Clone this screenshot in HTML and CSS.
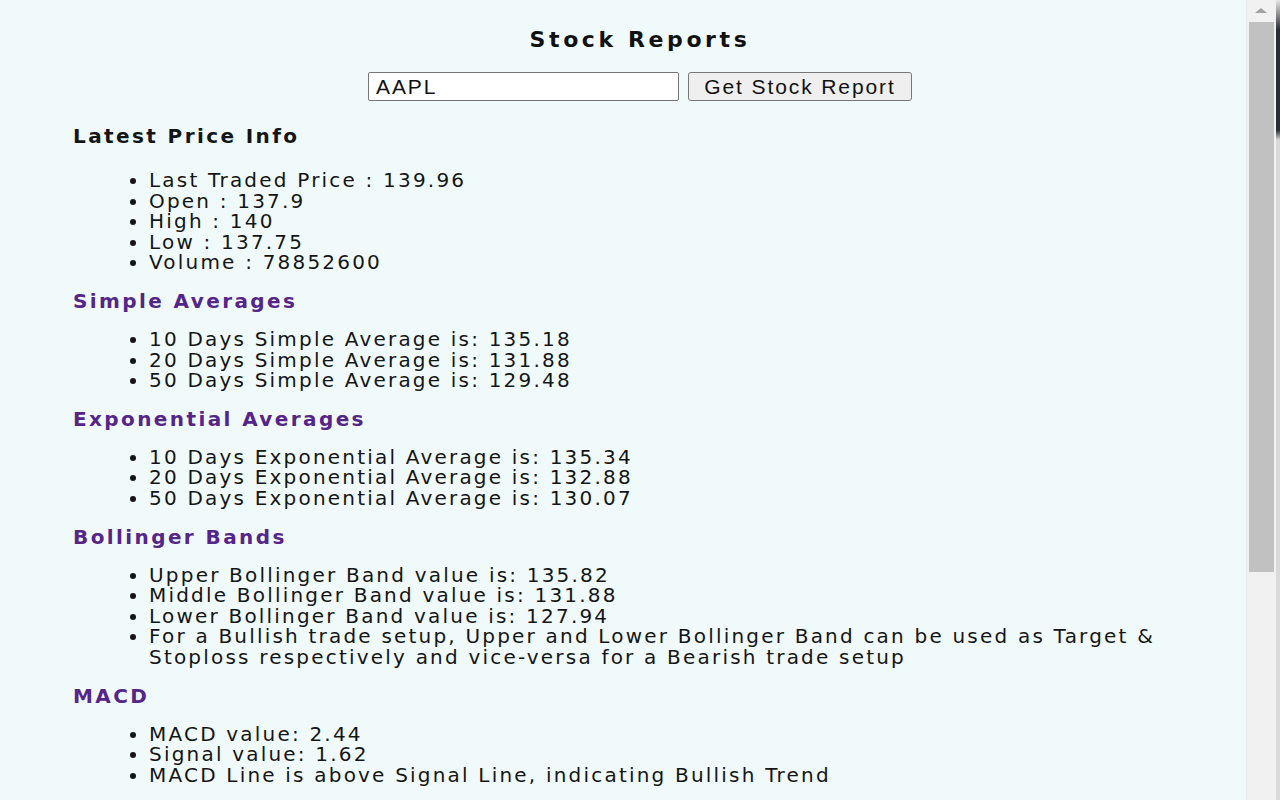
FILE: index.html
```html
<!DOCTYPE html>
<html lang="en">
<head>
  <meta charset="UTF-8">
  <title>Stock Reports</title>
  <link rel="stylesheet" href="styles.css">
</head>
<body>
<div class="page">
  <h1 class="title">Stock Reports</h1>

  <form class="search" onsubmit="return false">
    <input type="text" id="symbol" value="AAPL">
    <button type="submit">Get Stock Report</button>
  </form>

  <div class="report">
    <h3 class="section first">Latest Price Info</h3>
    <ul>
      <li>Last Traded Price : 139.96</li>
      <li>Open : 137.9</li>
      <li>High : 140</li>
      <li>Low : 137.75</li>
      <li>Volume : 78852600</li>
    </ul>

    <h3 class="section purple">Simple Averages</h3>
    <ul>
      <li>10 Days Simple Average is: 135.18</li>
      <li>20 Days Simple Average is: 131.88</li>
      <li>50 Days Simple Average is: 129.48</li>
    </ul>

    <h3 class="section purple">Exponential Averages</h3>
    <ul>
      <li>10 Days Exponential Average is: 135.34</li>
      <li>20 Days Exponential Average is: 132.88</li>
      <li>50 Days Exponential Average is: 130.07</li>
    </ul>

    <h3 class="section purple">Bollinger Bands</h3>
    <ul>
      <li>Upper Bollinger Band value is: 135.82</li>
      <li>Middle Bollinger Band value is: 131.88</li>
      <li>Lower Bollinger Band value is: 127.94</li>
      <li>For a Bullish trade setup, Upper and Lower Bollinger Band can be used as Target &amp; Stoploss respectively and vice-versa for a Bearish trade setup</li>
    </ul>

    <h3 class="section purple">MACD</h3>
    <ul>
      <li>MACD value: 2.44</li>
      <li>Signal value: 1.62</li>
      <li>MACD Line is above Signal Line, indicating Bullish Trend</li>
    </ul>
  </div>
</div>

<!-- popup scrollbar -->
<div class="scrollbar">
  <div class="arrow"></div>
  <div class="thumb"></div>
</div>
<div class="edge"></div>
</body>
</html>
```

FILE: styles.css
```css
* {
  margin: 0;
  padding: 0;
  box-sizing: border-box;
}

body, html {
  height: 100%;
  width: 100%;
  overflow: hidden;
}

body {
  background: #f0fafa;
  color: #151515;
  font-family: 'DejaVu Sans', Verdana, sans-serif;
}

.page {
  padding-top: 26px;
}

.title {
  font-size: 22px;
  line-height: 28px;
  letter-spacing: 3.6px;
  text-align: center;
  font-weight: bold;
  color: #111;
}

.search {
  display: flex;
  justify-content: center;
  gap: 9px;
  margin-top: 18px;
}

.search input,
.search button {
  height: 29px;
  font-family: 'Liberation Sans', Arial, sans-serif;
  font-size: 21px;
  letter-spacing: 1.9px;
  color: #111;
  border: 1px solid #767676;
  border-radius: 2px;
}

.search input {
  width: 311px;
  padding: 0 7px;
  background: #fff;
}

.search button {
  width: 224px;
  padding: 0;
  background: #efefef;
  border-radius: 3px;
}

.report {
  padding: 0 34px 0 73px;
}

.section {
  font-size: 20px;
  line-height: 24px;
  letter-spacing: 2.4px;
  font-weight: bold;
}

.section.first {
  margin-top: 23px;
  margin-bottom: 22px;
}

.section.purple {
  color: #55258a;
  margin-top: 1px;
}

ul {
  padding-left: 76px;
  margin-bottom: 16px;
  font-size: 20px;
  line-height: 20.6px;
  letter-spacing: 2.2px;
}

ul + .section {
  margin-bottom: 16px;
}

.scrollbar {
  position: fixed;
  top: 0;
  right: 4px;
  width: 30px;
  height: 100%;
  background: #f1f1f1;
  border-left: 1px solid #e8eaea;
}

.arrow {
  height: 20px;
  position: relative;
}

.arrow::after {
  content: '';
  position: absolute;
  left: 8px;
  top: 8px;
  border-left: 6px solid transparent;
  border-right: 6px solid transparent;
  border-bottom: 5px solid #a3a3a3;
}

.thumb {
  margin: 2px 2px 0 2px;
  height: 550px;
  background: #c1c1c1;
}

.edge {
  position: fixed;
  top: 0;
  right: 0;
  width: 4px;
  height: 100%;
  background: linear-gradient(#e6e6e6 0, #2a2d31 30px, #2a2d31 130px, #d9d9d9 140px, #d9d9d9 100%);
}
```
